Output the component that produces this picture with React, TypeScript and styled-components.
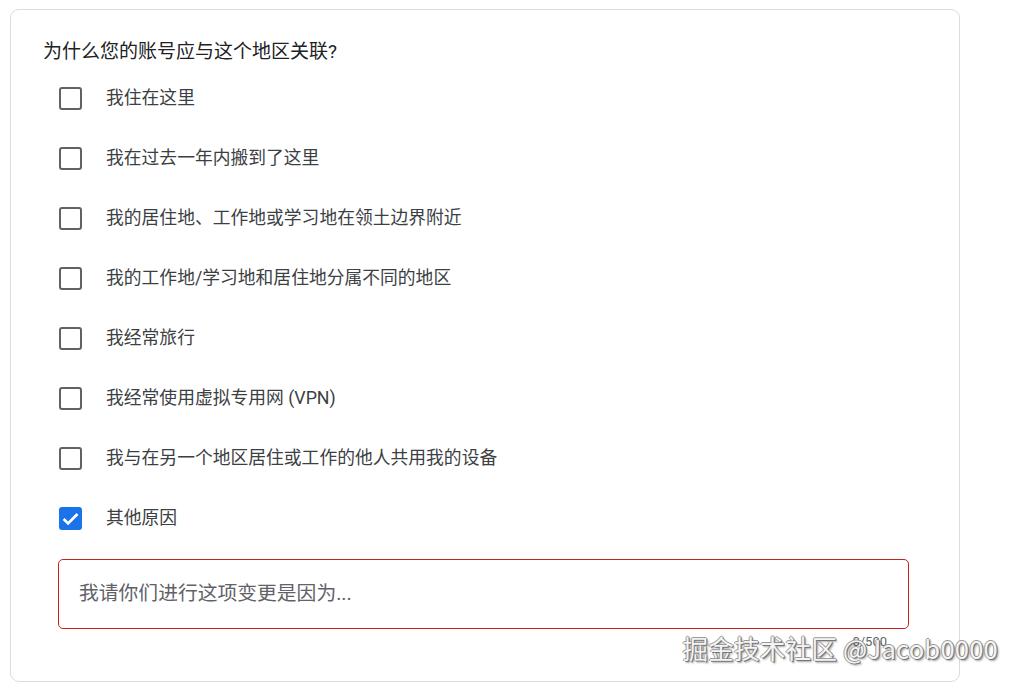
import React, { useState } from "react";
import styled, { createGlobalStyle } from "styled-components";

const Global = createGlobalStyle`
  html, body { margin: 0; padding: 0; background: #ffffff; }
  body { font-family: Roboto, "Noto Sans CJK SC", sans-serif; }
  * { box-sizing: border-box; }
`;

const Page = styled.div`
  position: relative;
  width: 1018px;
  height: 683px;
  overflow: hidden;
  padding: 9px 0 0 10px;
`;

const Card = styled.div`
  width: 950px;
  height: 673px;
  border: 1px solid #dadce0;
  border-radius: 9px;
  padding: 30px 48px 0 32px;
  display: flex;
  flex-direction: column;
`;

const Heading = styled.div`
  font-size: 19px;
  line-height: 24px;
  color: #202124;
  margin-bottom: 4px;
`;

const List = styled.div`
  display: flex;
  flex-direction: column;
  padding-left: 16px;
`;

const Row = styled.label`
  height: 60px;
  display: flex;
  align-items: center;
  gap: 24px;
  cursor: pointer;
`;

const Box = styled.span<{ $checked: boolean }>`
  width: 23px;
  height: 23px;
  flex: none;
  border-radius: 3px;
  border: 2px solid ${(p) => (p.$checked ? "#1a73e8" : "#5f6368")};
  background: ${(p) => (p.$checked ? "#1a73e8" : "transparent")};
  display: flex;
  align-items: center;
  justify-content: center;
`;

const Label = styled.span`
  font-size: 17.8px;
  line-height: 24px;
  color: #3c4043;
`;

const FieldWrap = styled.div`
  position: relative;
  margin-top: 11px;
  margin-left: 15px;
  width: 851px;
`;

const Area = styled.textarea`
  display: block;
  width: 100%;
  height: 70px;
  border: 1px solid #c5221f;
  border-radius: 5px;
  padding: 22px 20px;
  font-family: Roboto, "Noto Sans CJK SC", sans-serif;
  font-size: 19.8px;
  line-height: 24px;
  color: #202124;
  resize: none;
  outline: none;
  overflow: hidden;
  &::placeholder { color: #5f6368; }
`;

const Counter = styled.div`
  text-align: right;
  padding-right: 22px;
  margin-top: 5px;
  font-size: 13px;
  line-height: 16px;
  color: #5f6368;
`;

const Watermark = styled.div`
  position: absolute;
  right: 20px;
  top: 630px;
  font-family: "Noto Sans CJK SC", sans-serif;
  font-size: 25.6px;
  line-height: 36px;
  letter-spacing: 0.2px;
  color: #f4f4f4;
  text-shadow: 1px 1px 0 #777, -1px 0 0 #999, 0 -1px 0 #999, 1px 0 0 #888, 2px 2px 2px rgba(0,0,0,0.35);
  white-space: nowrap;
  pointer-events: none;
`;

const options = [
  "我住在这里",
  "我在过去一年内搬到了这里",
  "我的居住地、工作地或学习地在领土边界附近",
  "我的工作地/学习地和居住地分属不同的地区",
  "我经常旅行",
  "我经常使用虚拟专用网 (VPN)",
  "我与在另一个地区居住或工作的他人共用我的设备",
  "其他原因",
];

export default function App() {
  const [checked, setChecked] = useState<boolean[]>(options.map((_, i) => i === 7));
  const toggle = (i: number) =>
    setChecked((c) => c.map((v, j) => (j === i ? !v : v)));
  return (
    <Page>
      <Global />
      <Card>
        <Heading>为什么您的账号应与这个地区关联?</Heading>
        <List>
          {options.map((o, i) => (
            <Row key={o} onClick={() => toggle(i)}>
              <Box $checked={checked[i]}>
                {checked[i] && (
                  <svg width="19" height="19" viewBox="0 0 16 16">
                    <path d="M2.2 8.4 L6 12.1 L13.9 4.2" fill="none" stroke="#fff" strokeWidth="2.3" />
                  </svg>
                )}
              </Box>
              <Label>{o}</Label>
            </Row>
          ))}
        </List>
        <FieldWrap>
          <Area placeholder="我请你们进行这项变更是因为..." />
          <Counter>0/500</Counter>
        </FieldWrap>
      </Card>
      <Watermark>掘金技术社区 @Jacob0000</Watermark>
    </Page>
  );
}
